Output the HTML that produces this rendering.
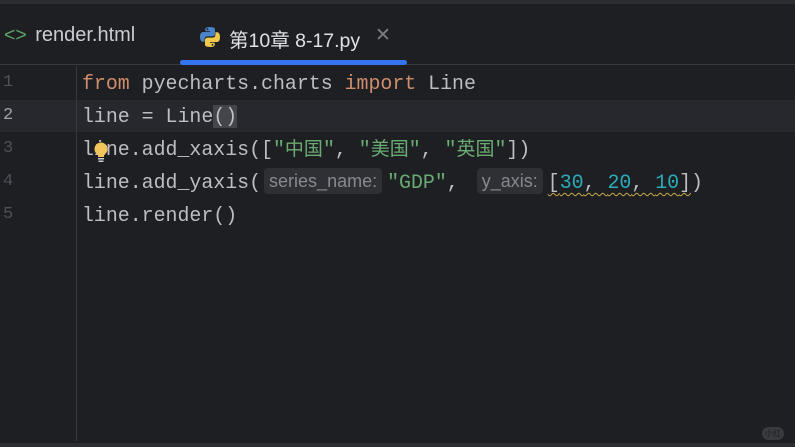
<!DOCTYPE html>
<html><head><meta charset="utf-8"><style>
*{margin:0;padding:0;box-sizing:border-box}
html,body{width:795px;height:447px;overflow:hidden}
body{background:#1e1f22;position:relative;font-family:"Liberation Sans","Noto Sans CJK SC",sans-serif}
.top{position:absolute;left:0;top:0;width:795px;height:4px;background:#2b2d30}
.tabs{position:absolute;left:0;top:4px;width:795px;height:61px;background:#1e1f22;border-bottom:1px solid #393b40}
.tab{position:absolute;font-size:19.5px;color:#c9ccd2;white-space:nowrap}
.ul{position:absolute;left:180px;top:60px;width:227px;height:5px;background:#3574f0;border-radius:3px}
.gut{position:absolute;left:76px;top:66px;width:1px;height:375px;background:#393b40}
.hl{position:absolute;left:0;top:100px;width:795px;height:32px;background:#26282e}
.ln{position:absolute;left:3px;font-family:"Liberation Mono",monospace;font-size:17px;color:#4b5059}
.code{position:absolute;left:82px;font-family:"Liberation Mono","Noto Sans CJK SC",monospace;font-size:19.9px;color:#bcbec4;white-space:pre;line-height:33px}
.k{color:#cf8e6d}.s{color:#6aab73}.n{color:#2aacb8}
.cj{font-size:19px}
.hint{display:inline-block;background:#2f3034;color:#868991;font-family:"Liberation Sans",sans-serif;font-size:18px;border-radius:4px;padding:0 5px;line-height:26px;vertical-align:1px}
.sq{text-decoration:underline wavy #c9a84a;text-decoration-thickness:1px;text-underline-offset:4px}
.bot{position:absolute;left:0;top:443px;width:795px;height:4px;background:#2b2d30}
</style></head><body>
<div class="top"></div>
<div class="tabs"></div>
<div class="tab" style="left:4px;top:24px"><span style="color:#5fa36b">&lt;&gt;</span> <span style="margin-left:3px;font-size:20px">render.html</span></div>
<svg style="position:absolute;left:199px;top:26px" width="22" height="22" viewBox="0 0 22 22">
<path d="M10.8 1C6 1 6.3 3 6.3 3v2.2h4.7v.8H4.3S1 5.6 1 10.8s2.8 5 2.8 5h1.8v-2.5s-.1-2.9 2.9-2.9h4.7s2.8 0 2.8-2.7V3.2S16.4 1 10.8 1z" fill="#4a83c8"/>
<path d="M11.2 21c4.8 0 4.5-2 4.5-2v-2.2H11v-.8h6.7s3.3.4 3.3-4.8-2.8-5-2.8-5h-1.8v2.5s.1 2.9-2.9 2.9H8.8S6 11.6 6 14.3v4.5S5.6 21 11.2 21z" fill="#f0c94a"/>
<circle cx="8.5" cy="3.2" r=".9" fill="#1e1f22"/><circle cx="13.5" cy="18.8" r=".9" fill="#1e1f22"/></svg>
<div class="tab" style="left:229px;top:24px;color:#dfe1e5">第10章 8-17.py</div>
<div class="tab" style="left:375px;top:24px;color:#7a7e85;font-size:19px">✕</div>
<div class="ul"></div>
<div class="hl"></div>
<div class="gut"></div>
<div class="ln" style="top:73px">1</div>
<div class="ln" style="top:106px;color:#a1a3ab">2</div>
<div class="ln" style="top:139px">3</div>
<div class="ln" style="top:172px">4</div>
<div class="ln" style="top:205px">5</div>
<div class="code" style="top:67px"><span class="k">from</span> pyecharts.charts <span class="k">import</span> Line</div>
<div class="code" style="top:100px">line = Line<span style="background:#43454a">()</span></div>
<div class="code" style="top:133px">line.add_xaxis([<span class="s">"<span class="cj">中国</span>"</span>, <span class="s">"<span class="cj">美国</span>"</span>, <span class="s">"<span class="cj">英国</span>"</span>])</div>
<div class="code" style="top:166px">line.add_yaxis(<span class="hint" style="margin:0 5px 0 3px">series_name:</span><span class="s">"GDP"</span>,<span class="hint" style="margin:0 5px 0 18px">y_axis:</span><span class="sq">[<span class="n">30</span>, <span class="n">20</span>, <span class="n">10</span>]</span>)</div>
<div class="code" style="top:199px">line.render()</div>
<svg style="position:absolute;left:93px;top:141px" width="16" height="24" viewBox="0 0 16 24"><circle cx="8" cy="8" r="6.5" fill="#f2c55c"/><rect x="5" y="13" width="6" height="3" fill="#f2c55c"/><rect x="5" y="17" width="6" height="1.5" fill="#c9ccd2"/><rect x="5.5" y="19.5" width="5" height="1.5" fill="#c9ccd2"/></svg>
<div style="position:absolute;left:762px;top:427px;width:22px;height:13px;border-radius:7px;background:#3a3b3f;color:#1e1f22;font-size:8px;text-align:center;line-height:13px">小红书</div>
<div class="bot"></div>
</body></html>
